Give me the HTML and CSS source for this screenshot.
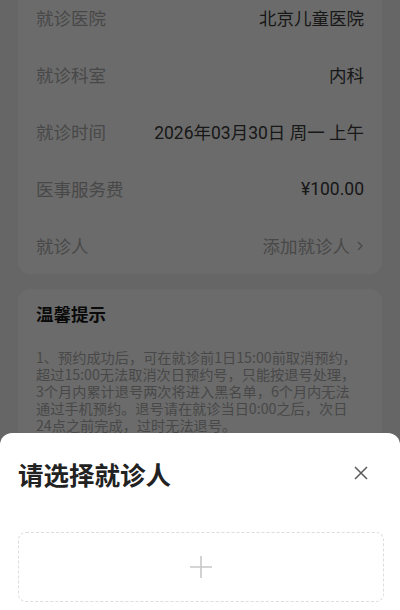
FILE: index.html
```html
<!DOCTYPE html>
<html lang="zh-CN">
<head>
    <meta charset="UTF-8">
    <meta name="viewport" content="width=device-width, initial-scale=1.0">
    <title>确认挂号</title>
    <link rel="stylesheet" href="styles.css">
</head>
<body>

    <!-- Order Info -->
    <div class="page">
        <div class="card info">
            <div class="row">
                <span class="label">就诊医院</span>
                <span class="value">北京儿童医院</span>
            </div>
            <div class="row">
                <span class="label">就诊科室</span>
                <span class="value">内科</span>
            </div>
            <div class="row">
                <span class="label">就诊时间</span>
                <span class="value">2026年03月30日 周一 上午</span>
            </div>
            <div class="row">
                <span class="label">医事服务费</span>
                <span class="value">¥100.00</span>
            </div>
            <div class="row">
                <span class="label">就诊人</span>
                <span class="value placeholder">添加就诊人
                    <svg class="arrow" width="8" height="12" viewBox="0 0 8 12"><path d="M2 2l4 4-4 4" fill="none" stroke="currentColor" stroke-width="1.3"/></svg>
                </span>
            </div>
        </div>

        <!-- Notice -->
        <div class="card notice">
            <h3>温馨提示</h3>
            <p>1、预约成功后，可在就诊前1日15:00前取消预约，超过15:00无法取消次日预约号，只能按退号处理，3个月内累计退号两次将进入黑名单，6个月内无法通过手机预约。退号请在就诊当日0:00之后，次日24点之前完成，过时无法退号。</p>
            <p>2、如果您的孩子有发热/咳嗽等症状，请提前告知医生，并到发热门诊就诊。</p>
        </div>
    </div>

    <!-- Patient Picker -->
    <div class="mask"></div>
    <div class="sheet">
        <div class="sheet-head">
            <h2>请选择就诊人</h2>
            <svg class="close" width="14" height="14" viewBox="0 0 14 14"><path d="M1 1l12 12M13 1L1 13" stroke="#5a5a5a" stroke-width="1.5"/></svg>
        </div>
        <div class="add-box">
            <svg width="24" height="24" viewBox="0 0 24 24"><path d="M12 1v22M1 12h22" stroke="#c8c8c8" stroke-width="1.6"/></svg>
        </div>
    </div>

</body>
</html>
```

FILE: styles.css
```css
/* General */
body {
    margin: 0;
    padding: 0;
    background-color: #f2f2f2;
    font-family: 'Roboto', 'Noto Sans CJK SC', sans-serif;
    overflow: hidden;
    height: 610px;
}

.page {
    margin-top: -11px;
    padding: 0 18px;
}

.card {
    background-color: #fff;
    border-radius: 12px;
}

/* Info Card */
.info {
    padding: 0 18px;
}

.row {
    display: flex;
    justify-content: space-between;
    align-items: center;
    height: 57px;
    font-size: 17.5px;
}

.label {
    color: #adadad;
}

.value {
    color: #3a3a3a;
}

.value.placeholder {
    color: #adadad;
    display: flex;
    align-items: center;
    gap: 6px;
}

/* Notice Card */
.notice {
    margin-top: 15px;
    padding: 13px 21px 20px 18px;
    font-family: 'Noto Sans CJK SC', sans-serif;
}

.notice h3 {
    margin: 0 0 23px;
    font-size: 17.5px;
    line-height: 24px;
    color: #1a1a1a;
}

.notice p {
    margin: 0;
    font-size: 14.2px;
    line-height: 17px;
    color: #adadad;
}

/* Bottom Sheet */
.mask {
    position: fixed;
    inset: 0;
    background-color: rgba(0, 0, 0, 0.58);
}

.sheet {
    position: fixed;
    left: 0;
    right: 0;
    top: 433px;
    bottom: 0;
    background-color: #fff;
    border-radius: 12px 12px 0 0;
    padding: 0 16px 0 18px;
}

.sheet-head {
    display: flex;
    justify-content: space-between;
    align-items: center;
    height: 80px;
}

.sheet-head h2 {
    margin: 0;
    font-size: 25.5px;
    font-weight: bold;
    color: #222;
}

.close {
    margin-right: 16px;
}

.add-box {
    margin-top: 19px;
    height: 68px;
    border: 1px dashed #ddd;
    border-radius: 8px;
    display: flex;
    justify-content: center;
    align-items: center;
}
```
